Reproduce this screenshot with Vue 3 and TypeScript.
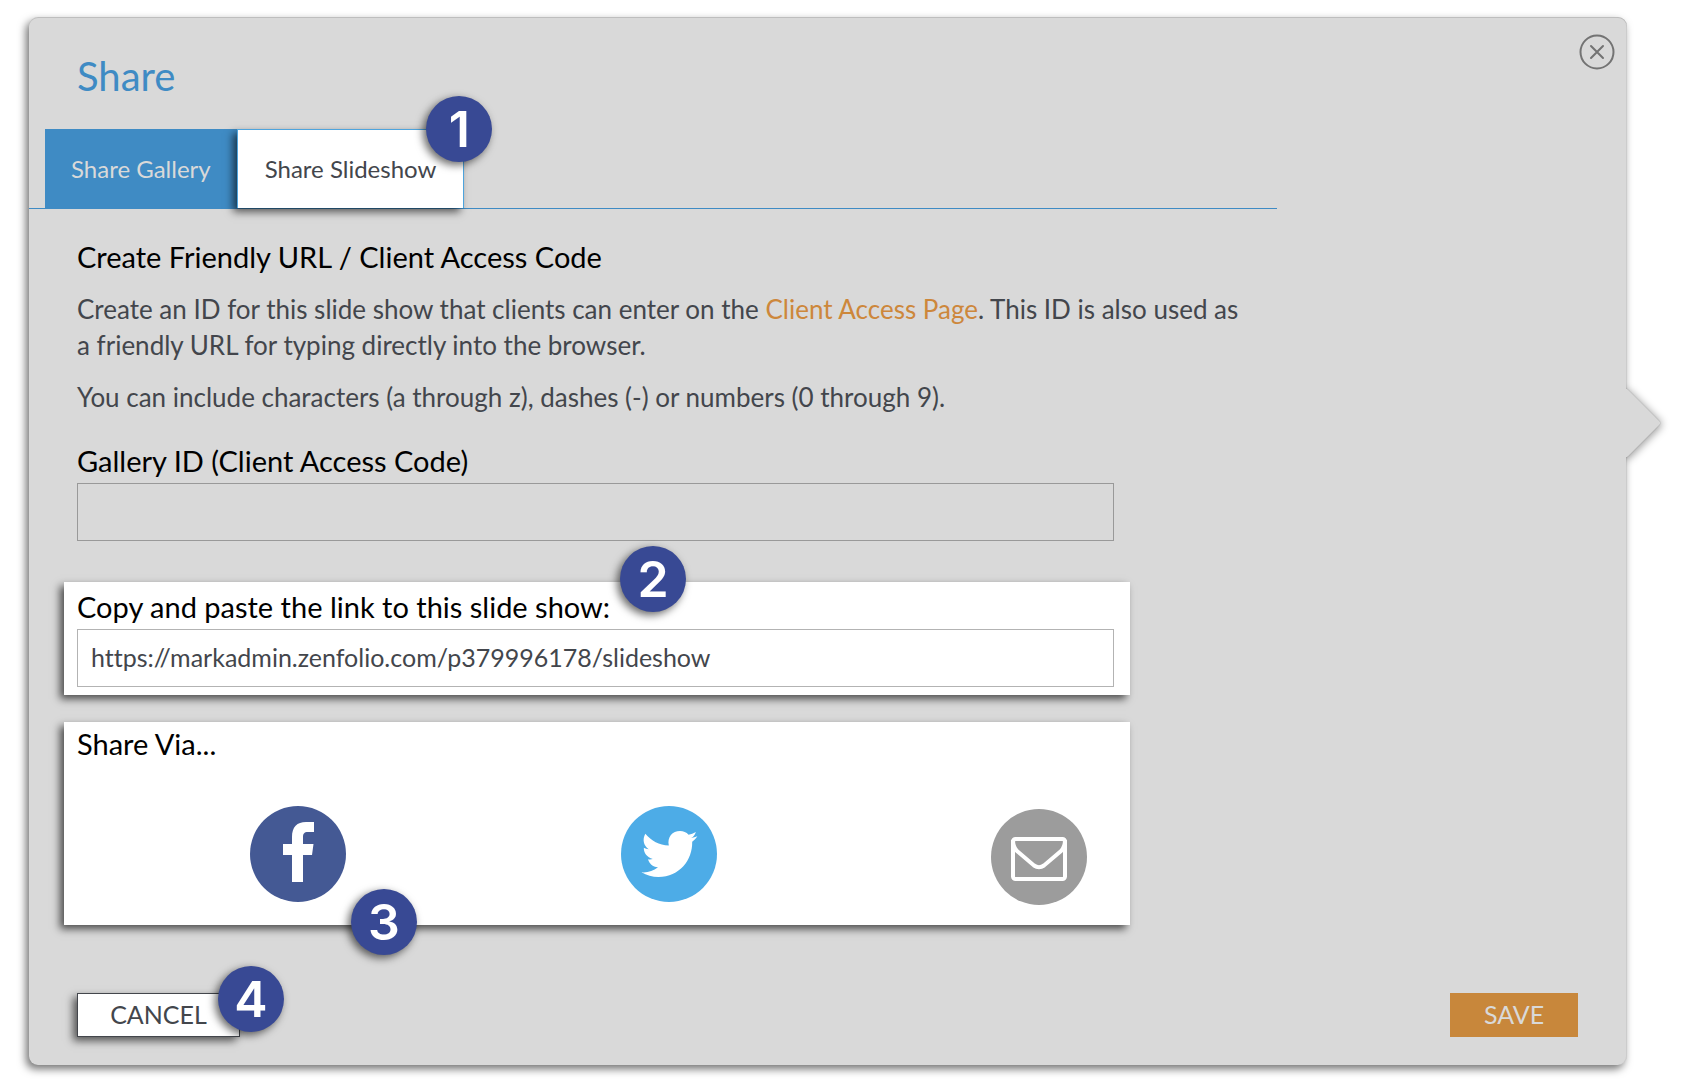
<script setup lang="ts">
import { ref } from 'vue'

const galleryId = ref('')
const slideshowUrl = ref('https://markadmin.zenfolio.com/p379996178/slideshow')
</script>

<template>
  <main class="panel">
    <span class="arrow" aria-hidden="true"></span>
    <header class="header">
      <h1 class="title">Share</h1>
      <button class="close" type="button" aria-label="Close">
        <svg viewBox="0 0 36 36" width="36" height="36" fill="none" stroke="#737373" stroke-width="2">
          <circle cx="18" cy="18" r="16.5" />
          <path d="M12 12 24 24M24 12 12 24" stroke-linecap="round" />
        </svg>
      </button>
    </header>

    <nav class="tabs">
      <button class="tab" type="button">Share Gallery</button>
      <button class="tab tab-active" type="button">
        Share Slideshow
        <span class="badge badge-corner">1</span>
      </button>
    </nav>

    <section class="content">
      <h2 class="heading">Create Friendly URL / Client Access Code</h2>
      <p class="text">
        Create an ID for this slide show that clients can enter on the
        <a class="link" href="#">Client Access Page</a>. This ID is also used as
        <br />a friendly URL for typing directly into the browser.
      </p>
      <p class="text">You can include characters (a through z), dashes (-) or numbers (0 through 9).</p>

      <div class="field">
        <label class="heading" for="gallery-id">Gallery ID (Client Access Code)</label>
        <input id="gallery-id" v-model="galleryId" class="input" type="text" />
      </div>

      <div class="card card-link">
        <label class="heading" for="slideshow-url">Copy and paste the link to this slide show:</label>
        <input id="slideshow-url" v-model="slideshowUrl" class="input" type="text" />
        <span class="badge badge-link">2</span>
      </div>

      <div class="card card-share">
        <h2 class="heading">Share Via...</h2>
        <div class="socials">
          <button class="social facebook" type="button" aria-label="Facebook">
            <svg viewBox="0 0 96 96" width="96" height="96" fill="#fff">
              <path d="M42 76V49H33V38H42V31C42 21 47 16 56 16H64V26H58C54 26 53 28 53 31V38H63.500L62 49H53V76Z" />
            </svg>
          </button>
          <button class="social twitter" type="button" aria-label="Twitter">
            <svg viewBox="0 0 96 96" width="96" height="96" fill="#fff">
              <path d="M20.500 66.300C27 66.800 32 65 37 61.200C31.500 61 28.300 57.500 27 53.300C28.800 53.600 30.300 53.500 31.800 53C26 51.500 22.700 47 22.800 41.800C24.300 42.700 25.800 43.200 27.700 43.200C22.500 39.300 21.200 33.500 24.300 27.700C30.500 35 38 39 47.800 39.500C46 31 51.500 25 59 25C62.500 25 65.300 26.300 67.600 28.700C70 28.200 72.500 27.200 74.900 25.900C74.100 28.400 72.500 30.600 70.200 32C72.300 31.700 74.400 31.200 76.400 30.300C75 32.400 73.200 34.300 71.200 35.800C71.600 54 58.500 71 37.500 71C31.400 71 25.500 69.300 20.500 66.300Z" />
            </svg>
          </button>
          <button class="social mail" type="button" aria-label="Email">
            <svg viewBox="0 0 96 96" width="96" height="96" fill="none" stroke="#fff" stroke-width="4">
              <rect x="22" y="30" width="52" height="40" rx="2.500" />
              <path d="M22 31C22 36 23 39 26 42L43 56.500Q48 60 53 56.500L70 42C73 39 74 36 74 31" />
            </svg>
          </button>
        </div>
        <span class="badge badge-share">3</span>
      </div>
    </section>

    <footer class="footer">
      <button class="button cancel" type="button">
        CANCEL
        <span class="badge badge-cancel">4</span>
      </button>
      <button class="button save" type="button">SAVE</button>
    </footer>
  </main>
</template>

<style>
body {
  background: #fff;
}
</style>

<style scoped>
* {
  box-sizing: border-box;
}

.panel {
  position: relative;
  margin: 17px 62px 19px 29px;
  padding-bottom: 28px;
  border-radius: 9px;
  background: #d9d9d9;
  box-shadow: inset 0 1px 0 rgba(0, 0, 0, 0.12), inset -1px 0 0 rgba(0, 0, 0, 0.06), -3px 4px 8px rgba(0, 0, 0, 0.55);
  color: #43464c;
  font-family: Lato, 'Open Sans', sans-serif;
  font-size: 24px;
  font-variant-ligatures: none;
  line-height: 36px;
}

.arrow {
  position: absolute;
  top: 351px;
  left: 100%;
  width: 50px;
  height: 110px;
  margin-left: -1px;
  overflow: hidden;
}

.arrow::before {
  content: '';
  position: absolute;
  top: 30px;
  left: -25px;
  width: 50px;
  height: 50px;
  border-radius: 3px;
  background: #d9d9d9;
  box-shadow: 0 0 1px rgba(0, 0, 0, 0.3), 2px 0 8px rgba(0, 0, 0, 0.4);
  transform: rotate(45deg);
}

button {
  position: relative;
  margin: 0;
  padding: 0;
  border: 0;
  background: none;
  color: inherit;
  font: inherit;
  cursor: pointer;
}

.header {
  display: flex;
  justify-content: space-between;
  align-items: flex-start;
  height: 112px;
  padding: 17px 12px 0 48px;
}

.title {
  margin: 16px 0 0;
  color: #3f8bc4;
  font-size: 40px;
  font-weight: 400;
  line-height: 52px;
}

.close,
.close svg {
  display: block;
}

.tabs {
  display: flex;
  align-items: flex-start;
  max-width: 1248px;
  height: 80px;
  padding-left: 16px;
  border-bottom: 1px solid #3f8bc4;
}

.tab {
  height: 80px;
  padding: 0 26px;
  background: #3f8bc4;
  color: #d9d9d9;
  white-space: nowrap;
}

.tab-active {
  height: 79px;
  padding: 0 27px;
  border: 1px solid #4ea4dd;
  border-bottom: 0;
  background: #fff;
  box-shadow: -4px 4px 8px rgba(0, 0, 0, 0.6);
  color: #43464c;
}

.content {
  max-width: 1250px;
  padding: 30px 0 0 48px;
}

.heading {
  display: block;
  margin: 0;
  color: #000;
  font-size: 29px;
  font-weight: 400;
}

.text {
  margin: 16px 0 0;
  font-size: 26px;
}

.link {
  color: #cd873b;
  text-decoration: none;
}

.field {
  max-width: 1037px;
  margin-top: 28px;
}

.input {
  display: block;
  width: 100%;
  height: 58px;
  margin: 4px 0 0;
  padding: 0 13px 2px;
  border: 1px solid #999;
  border-radius: 0;
  outline: 0;
  background: transparent;
  color: #43464c;
  font: inherit;
  font-size: 25px;
  font-variant-ligatures: none;
}

.card {
  position: relative;
  max-width: 1066px;
  margin-left: -13px;
  background: #fff;
  box-shadow: -4px 4px 8px rgba(0, 0, 0, 0.65);
}

.card-link {
  margin-top: 41px;
  padding: 7px 16px 8px 13px;
}

.card-link .input {
  border-color: #b3b3b3;
}

.card-share {
  margin-top: 27px;
  padding: 4px 43px 20px 13px;
}

.socials {
  display: flex;
  justify-content: space-between;
  margin-top: 44px;
  padding-left: 173px;
}

.social {
  width: 96px;
  height: 96px;
  border-radius: 50%;
}

.social svg {
  display: block;
}

.facebook {
  background: #445994;
}

.twitter {
  background: #4dace7;
}

.mail {
  margin-top: 3px;
  background: #9c9c9c;
}

.footer {
  display: flex;
  justify-content: space-between;
  margin-top: 68px;
  padding: 0 49px 0 48px;
}

.button {
  height: 44px;
  padding-bottom: 2px;
  font-size: 25px;
}

.cancel {
  width: 163px;
  border: 1px solid #43464c;
  background: #fff;
  box-shadow: -4px 4px 8px rgba(0, 0, 0, 0.6);
}

.save {
  width: 128px;
  background: #c8873b;
  color: #d9d9d9;
}

.badge {
  position: absolute;
  width: 66px;
  height: 66px;
  border-radius: 50%;
  background: #384994;
  box-shadow: -3px 3px 8px rgba(0, 0, 0, 0.6);
  color: #fff;
  font: 600 50px/66px Inter, 'Liberation Sans', sans-serif;
  text-align: center;
}

.badge-corner {
  top: -34px;
  right: -29px;
}

.badge-link {
  top: -36px;
  left: 556px;
}

.badge-share {
  bottom: -30px;
  left: 287px;
}

.badge-cancel {
  top: -28px;
  right: -45px;
}
</style>
